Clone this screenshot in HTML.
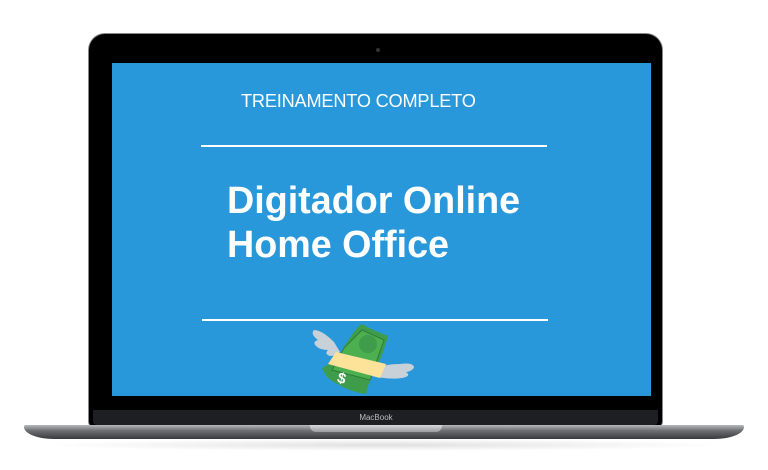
<!DOCTYPE html>
<html><head><style>
body{margin:0;width:768px;height:470px;background:#fff;position:relative;overflow:hidden;font-family:"Liberation Sans",sans-serif}
.bez{position:absolute;left:89px;top:34px;width:573px;height:392px;background:#000;border-radius:16px 16px 4px 4px;box-shadow:0 0 0 1px #888}
.chin{position:absolute;left:93px;top:410px;width:565px;height:15px;background:#1e1f23;border-radius:0 0 4px 4px}
.scr{position:absolute;left:112px;top:63px;width:539px;height:333px;background:#2898db}
.base{position:absolute;left:24px;top:425px;width:720px;height:14px;background:linear-gradient(#b8b9bc,#6e6f73 40%,#38393d);border-radius:2px 2px 30px 30px/2px 2px 12px 12px}
.notch{position:absolute;left:310px;top:425px;width:132px;height:7px;background:linear-gradient(#d7d8da,#9a9b9e);border-radius:0 0 6px 6px}
.shadow{position:absolute;left:40px;top:439px;width:690px;height:12px;background:radial-gradient(ellipse at center,rgba(0,0,0,.12),rgba(0,0,0,0) 70%)}
.cam{position:absolute;left:376px;top:48px;width:4px;height:4px;border-radius:50%;background:#333}
.t1{position:absolute;left:241px;width:244px;white-space:nowrap;top:91px;color:#fff;font-size:18px;letter-spacing:-.2px;transform:scaleX(1.01);transform-origin:left}
.line{position:absolute;height:2px;background:#fff}
.h{position:absolute;left:227px;color:#fff;font-weight:bold;font-size:37.7px;line-height:44px;top:178px;white-space:nowrap}
.mb{position:absolute;left:0;width:752px;text-align:center;top:413px;color:#bbb;font-size:8px}
</style></head><body>
<div class="shadow"></div>
<div class="bez"></div>
<div class="cam"></div>
<div class="scr"></div>
<div class="chin"></div>
<div class="mb">MacBook</div>
<div class="base"></div>
<div class="notch"></div>
<div class="t1">TREINAMENTO COMPLETO</div>
<div class="line" style="left:201px;top:145px;width:346px"></div>
<div class="h">Digitador Online<br>Home Office</div>
<div class="line" style="left:202px;top:319px;width:346px"></div>
<svg style="position:absolute;left:300px;top:322px" width="125" height="75" viewBox="0 0 125 75">
<path d="M34 20 q-12-12-20-12 q-4 4 4 10 q-6 2-2 6 q4 4 12 4 q-4 4 2 6 q6 0 10-4z" fill="#c8d0d8"/>
<path d="M74 46 q14-4 26-4 q14-2 14 4 q-4 4-8 4 q6 4-4 6 q-12 2-30-2z" fill="#c8d0d8"/>
<path d="M40 32 Q56 4 62 2 Q72 8 88 14 Q82 36 74 50 Q68 62 66 72 Q50 70 34 60 Q26 56 22 46 Q34 40 40 32z" fill="#3e9c4a"/>
<path d="M44 26 L62 8 L84 18 L70 58 L32 48z" fill="#4caf50" stroke="#2f7d38" stroke-width="1"/>
<circle cx="68" cy="22" r="9" fill="#3e9c4a"/>
<path d="M36 30 L86 42 L80 56 L28 42z" fill="#fde39a"/>
<text x="38" y="62" fill="#fff" font-size="15" font-weight="bold" transform="rotate(15 45 55)">$</text>
</svg>
</body></html>
